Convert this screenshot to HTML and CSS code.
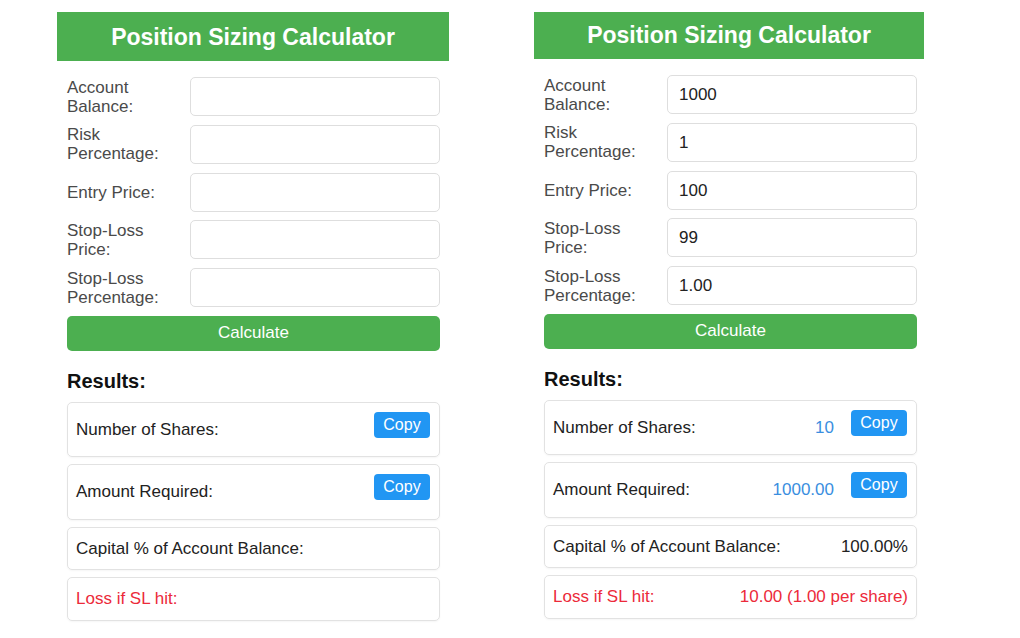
FILE: index.html
```html
<!DOCTYPE html>
<html lang="en">
<head>
<meta charset="utf-8">
<title>Position Sizing Calculator</title>
<link rel="stylesheet" href="styles.css">
</head>
<body>
<div class="page">
  <section class="panel">
    <h1 class="title">Position Sizing Calculator</h1>
    <div class="body">
      <div class="field"><label class="label">Account Balance:</label><div class="input"></div></div>
      <div class="field"><label class="label">Risk Percentage:</label><div class="input"></div></div>
      <div class="field"><label class="label">Entry Price:</label><div class="input"></div></div>
      <div class="field"><label class="label">Stop-Loss Price:</label><div class="input"></div></div>
      <div class="field"><label class="label">Stop-Loss Percentage:</label><div class="input"></div></div>
      <button class="calc">Calculate</button>
      <h2 class="results-title">Results:</h2>
      <div class="result tall"><span class="rlabel">Number of Shares:</span><span class="rvalue blue"></span><button class="copy">Copy</button></div>
      <div class="result tall"><span class="rlabel">Amount Required:</span><span class="rvalue blue"></span><button class="copy">Copy</button></div>
      <div class="result"><span class="rlabel">Capital % of Account Balance:</span><span class="rvalue"></span></div>
      <div class="result red"><span class="rlabel">Loss if SL hit:</span><span class="rvalue"></span></div>
    </div>
  </section>
  <section class="panel panel-right">
    <h1 class="title">Position Sizing Calculator</h1>
    <div class="body">
      <div class="field"><label class="label">Account Balance:</label><div class="input">1000</div></div>
      <div class="field"><label class="label">Risk Percentage:</label><div class="input">1</div></div>
      <div class="field"><label class="label">Entry Price:</label><div class="input">100</div></div>
      <div class="field"><label class="label">Stop-Loss Price:</label><div class="input">99</div></div>
      <div class="field"><label class="label">Stop-Loss Percentage:</label><div class="input">1.00</div></div>
      <button class="calc">Calculate</button>
      <h2 class="results-title">Results:</h2>
      <div class="result tall"><span class="rlabel">Number of Shares:</span><span class="rvalue blue">10</span><button class="copy">Copy</button></div>
      <div class="result tall"><span class="rlabel">Amount Required:</span><span class="rvalue blue">1000.00</span><button class="copy">Copy</button></div>
      <div class="result"><span class="rlabel">Capital % of Account Balance:</span><span class="rvalue">100.00%</span></div>
      <div class="result red"><span class="rlabel">Loss if SL hit:</span><span class="rvalue">10.00 (1.00 per share)</span></div>
    </div>
  </section>
</div>
</body>
</html>
```
FILE: styles.css
```css
* { box-sizing: border-box; }
html, body { margin: 0; padding: 0; background: #fff; }
body {
  font-family: "Liberation Sans", Arial, sans-serif;
  color: #333;
  width: 1020px;
  height: 638px;
  overflow: hidden;
}
.page {
  display: flex;
  align-items: flex-start;
  gap: 85px;
  padding: 12px 0 0 57px;
}
.panel { width: 392px; }
.title {
  margin: 0;
  height: 49px;
  background: #4caf50;
  color: #fff;
  font-size: 23px;
  font-weight: bold;
  text-align: center;
  line-height: 50px;
}
.panel-right .title { height: 47px; line-height: 47px; width: 390px; }
.body {
  padding: 16px 9px 0 10px;
  display: flex;
  flex-direction: column;
}
.field {
  display: flex;
  align-items: center;
  margin-bottom: 8.75px;
}
.label {
  width: 123px;
  padding-right: 10px;
  font-size: 17px;
  line-height: 19px;
  color: #4a4a4a;
}
.input {
  flex: 1;
  height: 39px;
  border: 1px solid #dedede;
  border-radius: 5px;
  padding: 0 11px;
  font-size: 17px;
  line-height: 37px;
  color: #222;
}
.calc {
  height: 35px;
  margin: 0;
  border: none;
  border-radius: 5px;
  background: #4caf50;
  color: #fff;
  font-family: inherit;
  font-size: 17px;
}
.results-title {
  margin: 19px 0 9px;
  font-size: 20px;
  line-height: 23px;
  font-weight: bold;
  color: #111;
}
.result {
  display: flex;
  align-items: center;
  border: 1px solid #e2e2e2;
  border-radius: 5px;
  padding: 10px 8px 10px 8px;
  margin-bottom: 7px;
  font-size: 17px;
  line-height: 21.5px;
  color: #222;
  box-shadow: 0 1px 2px rgba(0,0,0,0.04);
}
.rlabel { flex: 1; }
.rvalue { white-space: nowrap; }
.rvalue.blue { color: #3a8ee0; margin-right: 17px; }
.red { color: #ec2a3a; }
.copy {
  width: 56px;
  height: 26px;
  margin: -1px 1px 8.5px 0;
  border: none;
  border-radius: 4px;
  background: #2196f3;
  color: #fff;
  font-family: inherit;
  font-size: 16px;
  padding: 0;
}
```
